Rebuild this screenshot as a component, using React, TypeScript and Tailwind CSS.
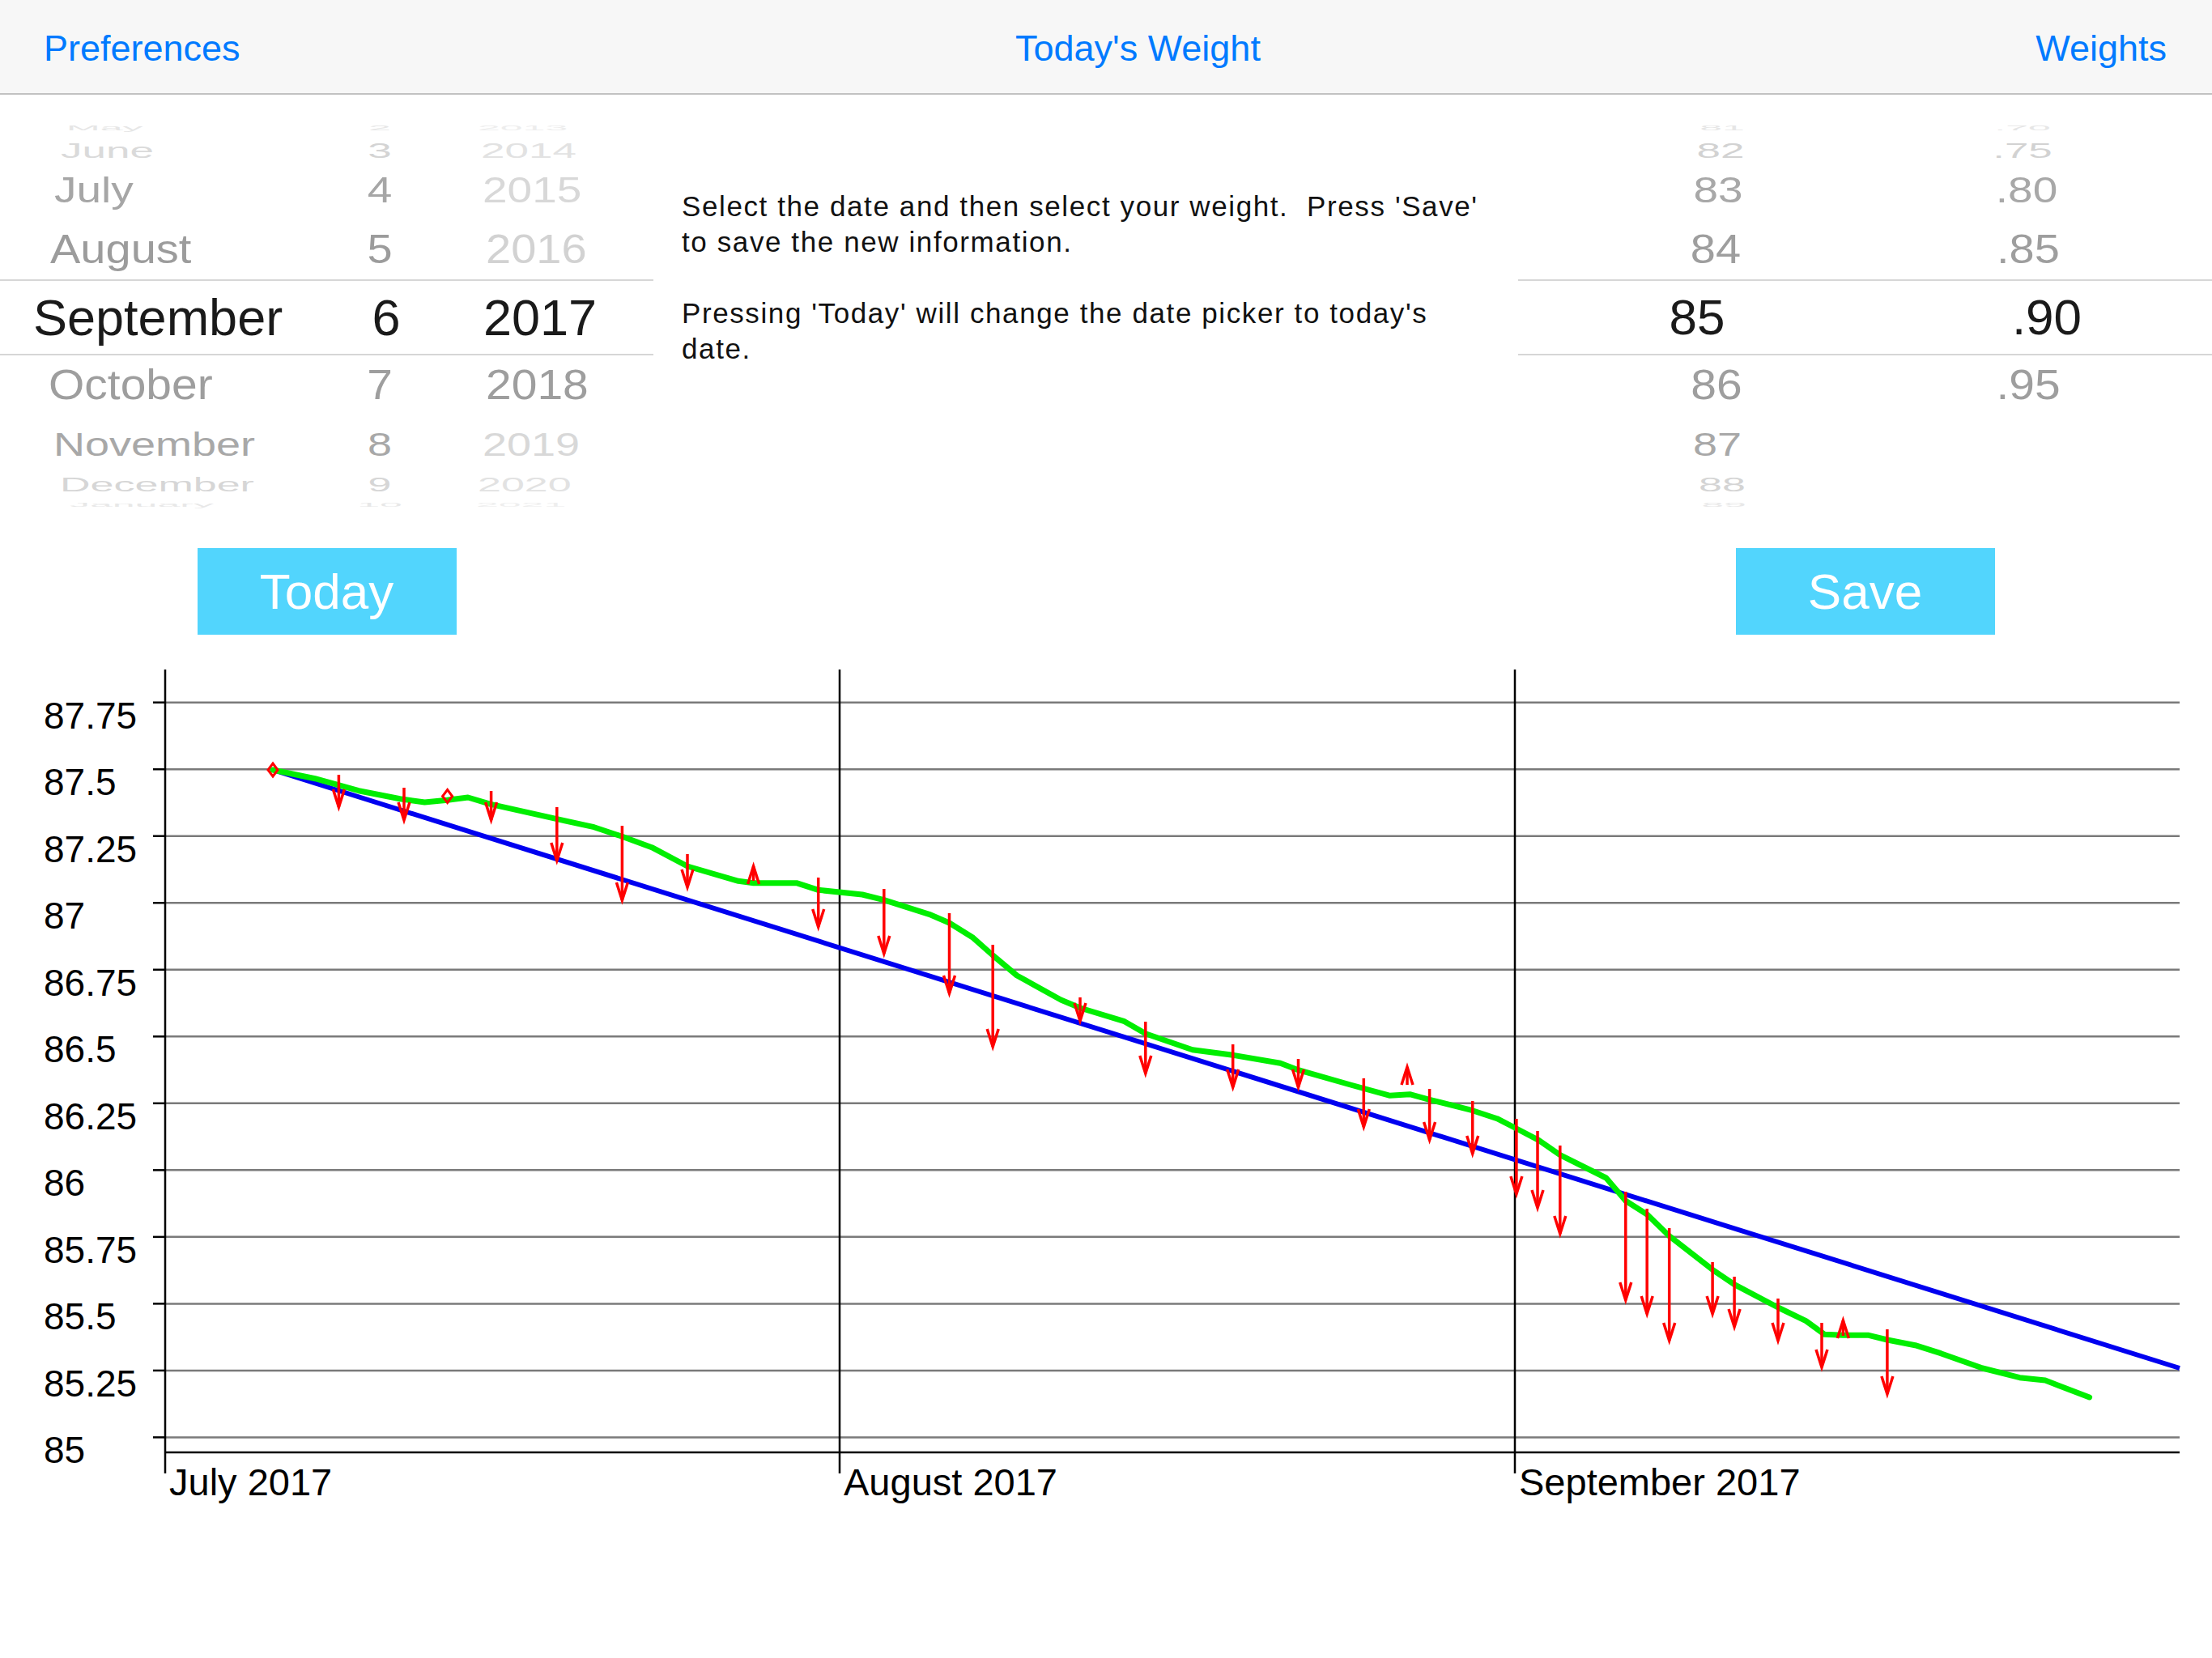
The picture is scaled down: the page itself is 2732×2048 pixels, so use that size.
import React from "react";

type DateRow = {
  h: string;
  m: string;
  d: string;
  y: string;
  mPl: string;
  yPl: string;
  size: string;
  sc: string;
  mc: string;
  dc: string;
  yc: string;
  sel?: boolean;
};

const dateRows: DateRow[] = [
  { h: "h-[26px]", m: "May", d: "2", y: "2013", mPl: "pl-[82px]", yPl: "pl-[82px]", size: "text-[50px]", sc: "scale-y-[0.18]", mc: "text-[#e6e6e6]", dc: "text-[#e6e6e6]", yc: "text-[#ededed]" },
  { h: "h-[29px]", m: "June", d: "3", y: "2014", mPl: "pl-[75px]", yPl: "pl-[86px]", size: "text-[53px]", sc: "scale-y-[0.5]", mc: "text-[#dadada]", dc: "text-[#d4d4d4]", yc: "text-[#e2e2e2]" },
  { h: "h-[70px]", m: "July", d: "4", y: "2015", mPl: "pl-[67px]", yPl: "pl-[88px]", size: "text-[55px]", sc: "scale-y-[0.8]", mc: "text-[#a6a6a6]", dc: "text-[#a6a6a6]", yc: "text-[#d8d8d8]" },
  { h: "h-[75px]", m: "August", d: "5", y: "2016", mPl: "pl-[62px]", yPl: "pl-[92px]", size: "text-[56px]", sc: "scale-y-[0.9]", mc: "text-[#9c9c9c]", dc: "text-[#9c9c9c]", yc: "text-[#d2d2d2]" },
  { h: "h-[94px]", m: "September", d: "6", y: "2017", mPl: "pl-[41px]", yPl: "pl-[73px]", size: "text-[63px]", sc: "scale-y-100", mc: "text-[#1a1a1a]", dc: "text-[#1a1a1a]", yc: "text-[#1a1a1a]", sel: true },
  { h: "h-[72px]", m: "October", d: "7", y: "2018", mPl: "pl-[60px]", yPl: "pl-[92px]", size: "text-[57px]", sc: "scale-y-[0.92]", mc: "text-[#9e9e9e]", dc: "text-[#9e9e9e]", yc: "text-[#9e9e9e]" },
  { h: "h-[76px]", m: "November", d: "8", y: "2019", mPl: "pl-[66px]", yPl: "pl-[88px]", size: "text-[54px]", sc: "scale-y-[0.74]", mc: "text-[#a8a8a8]", dc: "text-[#a8a8a8]", yc: "text-[#d8d8d8]" },
  { h: "h-[24px]", m: "December", d: "9", y: "2020", mPl: "pl-[74px]", yPl: "pl-[82px]", size: "text-[52px]", sc: "scale-y-[0.45]", mc: "text-[#d6d6d6]", dc: "text-[#d6d6d6]", yc: "text-[#e2e2e2]" },
  { h: "h-[24px]", m: "January", d: "10", y: "2021", mPl: "pl-[86px]", yPl: "pl-[80px]", size: "text-[50px]", sc: "scale-y-[0.16]", mc: "text-[#e8e8e8]", dc: "text-[#e8e8e8]", yc: "text-[#eeeeee]" },
];

type WRow = {
  h: string;
  a: string;
  b: string;
  aMl: string;
  bMl: string;
  size: string;
  sc: string;
  c: string;
  sel?: boolean;
};

const weightRows: WRow[] = [
  { h: "h-[26px]", a: "81", b: ".70", aMl: "ml-[152px]", bMl: "ml-[171px]", size: "text-[50px]", sc: "scale-y-[0.18]", c: "text-[#e6e6e6]" },
  { h: "h-[29px]", a: "82", b: ".75", aMl: "ml-[150px]", bMl: "ml-[173px]", size: "text-[53px]", sc: "scale-y-[0.5]", c: "text-[#d2d2d2]" },
  { h: "h-[70px]", a: "83", b: ".80", aMl: "ml-[147px]", bMl: "ml-[181px]", size: "text-[55px]", sc: "scale-y-[0.8]", c: "text-[#a8a8a8]" },
  { h: "h-[75px]", a: "84", b: ".85", aMl: "ml-[144px]", bMl: "ml-[186px]", size: "text-[56px]", sc: "scale-y-[0.9]", c: "text-[#9e9e9e]" },
  { h: "h-[94px]", a: "85", b: ".90", aMl: "ml-[121px]", bMl: "ml-[232px]", size: "text-[62px]", sc: "scale-y-100", c: "text-[#1a1a1a]", sel: true },
  { h: "h-[72px]", a: "86", b: ".95", aMl: "ml-[145px]", bMl: "ml-[185px]", size: "text-[57px]", sc: "scale-y-[0.92]", c: "text-[#9e9e9e]" },
  { h: "h-[76px]", a: "87", b: "", aMl: "ml-[146px]", bMl: "ml-[185px]", size: "text-[54px]", sc: "scale-y-[0.74]", c: "text-[#a8a8a8]" },
  { h: "h-[24px]", a: "88", b: "", aMl: "ml-[152px]", bMl: "ml-[185px]", size: "text-[52px]", sc: "scale-y-[0.45]", c: "text-[#d4d4d4]" },
  { h: "h-[24px]", a: "89", b: "", aMl: "ml-[154px]", bMl: "ml-[185px]", size: "text-[50px]", sc: "scale-y-[0.16]", c: "text-[#e8e8e8]" },
];

function DatePicker() {
  return (
    <div className="flex flex-col pt-[28px]">
      {dateRows.map((r) => (
        <div
          key={r.m}
          className={`flex items-center ${r.h} ${r.sel ? "border-y-2 border-[#d6d6d6]" : ""}`}
        >
          <div className={`w-[430px] ${r.mPl}`}>
            <div className={`${r.size} ${r.sc} ${r.mc} leading-none whitespace-nowrap`}>{r.m}</div>
          </div>
          <div className={`${r.sel ? "w-[94px]" : "w-[78px]"} text-center`}>
            <div className={`${r.size} ${r.sc} ${r.dc} leading-none`}>{r.d}</div>
          </div>
          <div className={`${r.yPl}`}>
            <div className={`${r.size} ${r.sc} ${r.yc} leading-none`}>{r.y}</div>
          </div>
        </div>
      ))}
    </div>
  );
}

function WeightPicker() {
  return (
    <div className="flex flex-col pt-[28px]">
      {weightRows.map((r) => (
        <div
          key={r.a}
          className={`flex items-center ${r.h} ${r.sel ? "border-y-2 border-[#d6d6d6]" : ""}`}
        >
          <div className={`${r.aMl} w-[200px] text-center`}>
            <div className={`${r.size} ${r.sc} ${r.c} leading-none`}>{r.a}</div>
          </div>
          <div className={`${r.bMl} w-[200px] text-center`}>
            <div className={`${r.size} ${r.sc} ${r.c} leading-none`}>{r.b}</div>
          </div>
        </div>
      ))}
    </div>
  );
}

const gridLabels = ["87.75", "87.5", "87.25", "87", "86.75", "86.5", "86.25", "86", "85.75", "85.5", "85.25", "85"];
const gridY = (k: number) => 867.7 + k * 82.52;

const downArrows: [number, number, number][] = [
  [418.4, 957, 997],
  [499, 973, 1013],
  [606.6, 977, 1013],
  [687.8, 997, 1063],
  [768.4, 1020, 1112],
  [849, 1055, 1096],
  [930.6, 1088, 1070],
  [1010.7, 1084, 1145],
  [1091.8, 1098, 1178],
  [1172.5, 1128, 1227],
  [1226.2, 1167, 1293],
  [1334, 1232, 1261],
  [1414.8, 1262, 1326],
  [1522.7, 1290, 1343],
  [1603.5, 1308, 1343],
  [1684.3, 1332, 1392],
  [1738, 1340, 1318],
  [1765.6, 1345, 1408],
  [1818.7, 1360, 1425],
  [1872.9, 1382, 1475],
  [1899, 1397, 1492],
  [1926.8, 1415, 1524],
  [2007.8, 1472, 1606],
  [2034.2, 1493, 1623],
  [2061.7, 1517, 1656],
  [2115.1, 1559, 1623],
  [2142.1, 1577, 1639],
  [2196, 1604, 1656],
  [2250, 1634, 1689],
  [2276.4, 1650, 1631],
  [2330.9, 1642, 1722],
];

const green: [number, number][] = [
  [337, 951], [389, 961.7], [443, 976.7], [494, 986.7], [524.5, 991], [552.6, 988.3], [578, 985],
  [606, 993.3], [687.8, 1011.7], [733.7, 1021.7], [768.4, 1033.3], [805, 1046.7], [849, 1070],
  [912, 1088.3], [930.6, 1090.7], [983.7, 1090.7], [1010.7, 1099.3], [1065, 1105], [1091.7, 1111.7],
  [1147.6, 1129.3], [1172.5, 1140], [1201.8, 1158.3], [1226.2, 1180], [1256, 1205], [1310.2, 1235],
  [1334, 1245], [1388.8, 1261.7], [1414.8, 1276.7], [1472.8, 1296.7], [1522.7, 1303.3], [1581.3, 1313.3],
  [1603.5, 1321.7], [1668, 1340], [1716.8, 1353.3], [1741.2, 1351.7], [1765.6, 1358.3], [1818.7, 1371.7],
  [1849, 1381.7], [1872.9, 1394], [1900.4, 1408.3], [1926.8, 1426.7], [1983.7, 1455], [2007.8, 1483.3],
  [2034.2, 1500], [2061.7, 1526.7], [2115.1, 1568.3], [2142.1, 1586.7], [2196, 1615], [2230.5, 1631.7],
  [2253.5, 1648.3], [2276.4, 1649.3], [2308, 1649.3], [2331, 1655], [2365.4, 1661.7], [2397, 1671.7],
  [2448.6, 1690], [2494.5, 1701.7], [2526, 1705], [2580.6, 1726],
];

const FONT = "Liberation Sans, Arial, sans-serif";

function Chart() {
  return (
    <svg width={2732} height={1100} viewBox="0 800 2732 1100" className="block">
      {gridLabels.map((l, k) => (
        <g key={l}>
          <line x1={204} x2={2692} y1={gridY(k)} y2={gridY(k)} stroke="#7a7a7a" strokeWidth={2.5} />
          <line x1={189} x2={204} y1={gridY(k)} y2={gridY(k)} stroke="#000" strokeWidth={2.5} />
          <text x={54} y={gridY(k) + 32} fontSize={46} fill="#000" fontFamily={FONT}>
            {l}
          </text>
        </g>
      ))}
      <line x1={204} x2={204} y1={827} y2={1820} stroke="#000" strokeWidth={2.5} />
      <line x1={1037} x2={1037} y1={827} y2={1820} stroke="#000" strokeWidth={2.5} />
      <line x1={1871} x2={1871} y1={827} y2={1820} stroke="#000" strokeWidth={2.5} />
      <line x1={204} x2={2692} y1={1794} y2={1794} stroke="#000" strokeWidth={2.5} />
      <text x={209} y={1847} fontSize={47} fill="#000" fontFamily={FONT}>July 2017</text>
      <text x={1042} y={1847} fontSize={47} fill="#000" fontFamily={FONT}>August 2017</text>
      <text x={1876} y={1847} fontSize={47} fill="#000" fontFamily={FONT}>September 2017</text>

      <line x1={337} y1={951} x2={2692} y2={1690} stroke="#0000f0" strokeWidth={6} />
      <polyline
        points={green.map((p) => p.join(",")).join(" ")}
        fill="none"
        stroke="#00ee00"
        strokeWidth={7}
        strokeLinejoin="round"
        strokeLinecap="round"
      />
      {downArrows.map(([x, y1, y2]) => {
        const dir = y2 > y1 ? 1 : -1;
        return (
          <g key={x} stroke="#ff0000" strokeWidth={3.5} fill="none">
            <line x1={x} x2={x} y1={y1} y2={y2} />
            <polyline points={`${x - 7},${y2 - dir * 22} ${x},${y2} ${x + 7},${y2 - dir * 22}`} />
          </g>
        );
      })}
      {[
        [337, 951],
        [552.6, 983.5],
      ].map(([x, y]) => (
        <polygon
          key={x}
          points={`${x},${y - 8} ${x + 6},${y} ${x},${y + 8} ${x - 6},${y}`}
          fill="none"
          stroke="#ff0000"
          strokeWidth={3}
        />
      ))}
    </svg>
  );
}

export default function App() {
  return (
    <div className="w-[2732px] h-[2048px] bg-white overflow-hidden font-['Liberation_Sans',Arial,sans-serif]">
      {/* nav bar */}
      <div className="flex h-[117px] items-center border-b-2 border-[#c2c2c2] bg-[#f7f7f7] pl-[54px] pr-[56px] pt-[4px] text-[45px] leading-none text-[#007aff]">
        <div className="whitespace-nowrap">Preferences</div>
        <div className="flex-1 text-center whitespace-nowrap">Today's Weight</div>
        <div className="whitespace-nowrap">Weights</div>
      </div>

      {/* top area */}
      <div className="flex">
        <div className="flex w-[807px] flex-col items-stretch">
          <DatePicker />
          <div className="mt-[42px] flex justify-center">
            <div className="flex h-[107px] w-[320px] items-center justify-center bg-[#52d5fd] text-[62px] leading-none text-white">
              Today
            </div>
          </div>
        </div>
        <div className="flex-1 pl-[35px] pt-[116px]">
          <div className="whitespace-pre text-[35px] leading-[44px] tracking-[1.6px] text-[#111]">
            {`Select the date and then select your weight.  Press 'Save'\nto save the new information.\n\nPressing 'Today' will change the date picker to today's\ndate.`}
          </div>
        </div>
        <div className="flex w-[857px] flex-col">
          <WeightPicker />
          <div className="mt-[42px] flex justify-center">
            <div className="flex h-[107px] w-[320px] items-center justify-center bg-[#52d5fd] text-[62px] leading-none text-white">
              Save
            </div>
          </div>
        </div>
      </div>

      <div className="mt-[16px]">
        <Chart />
      </div>
    </div>
  );
}
